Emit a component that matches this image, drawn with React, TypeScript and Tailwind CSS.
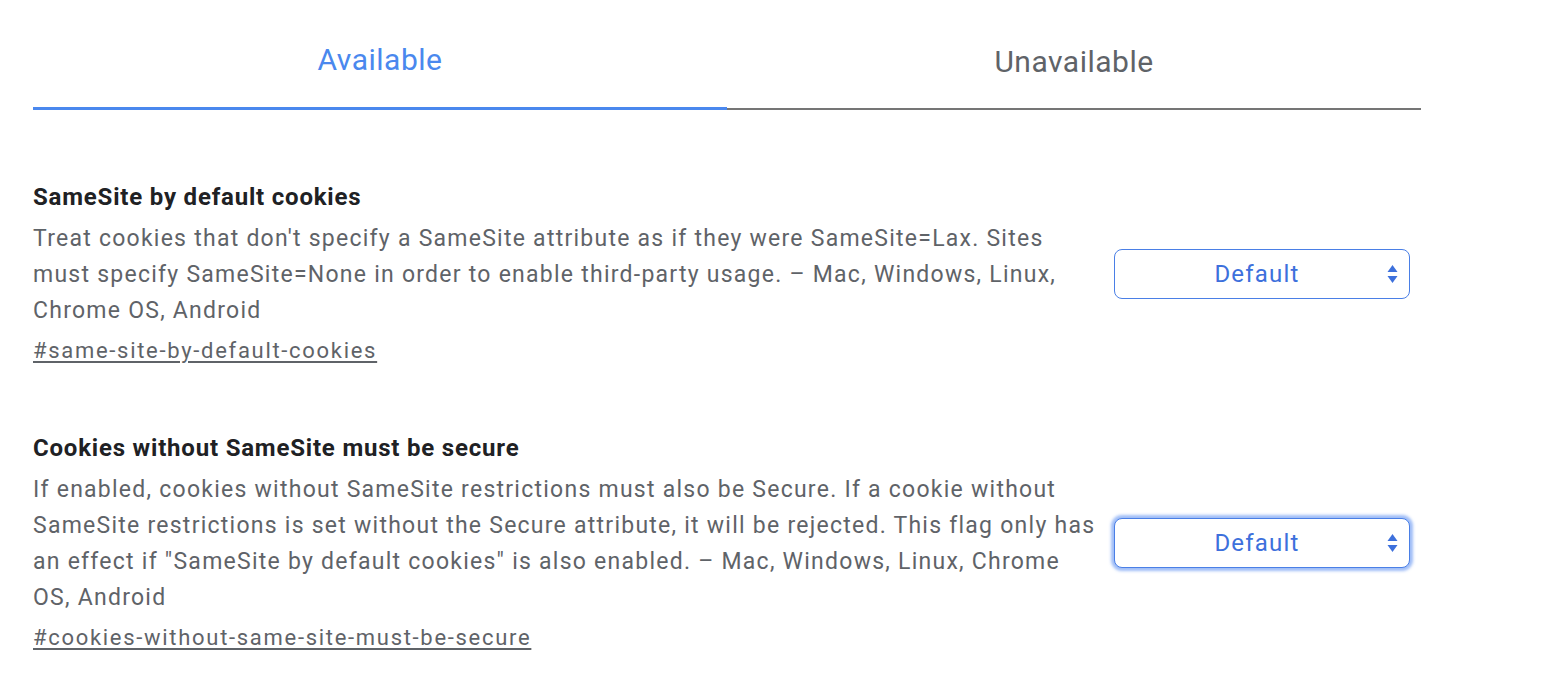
import React from 'react';

type Flag = {
  name: string;
  lines: string[];
  anchor: string;
  focused?: boolean;
};

// description lines broken the same way the page wraps them
const flags: Flag[] = [
  {
    name: 'SameSite by default cookies',
    lines: [
      "Treat cookies that don't specify a SameSite attribute as if they were SameSite=Lax. Sites",
      'must specify SameSite=None in order to enable third-party usage. – Mac, Windows, Linux,',
      'Chrome OS, Android',
    ],
    anchor: '#same-site-by-default-cookies',
  },
  {
    name: 'Cookies without SameSite must be secure',
    lines: [
      'If enabled, cookies without SameSite restrictions must also be Secure. If a cookie without',
      'SameSite restrictions is set without the Secure attribute, it will be rejected. This flag only has',
      'an effect if "SameSite by default cookies" is also enabled. – Mac, Windows, Linux, Chrome',
      'OS, Android',
    ],
    anchor: '#cookies-without-same-site-must-be-secure',
    focused: true,
  },
];

function SelectBox({ focused }: { focused?: boolean }) {
  return (
    <div
      className={`relative flex h-[50px] w-[296px] shrink-0 items-center justify-center rounded-[8px] border-[1.5px] border-[#4a7fe6] bg-white pr-[10px] ${
        focused ? 'shadow-[0_0_3px_3px_rgba(80,135,240,0.55)]' : ''
      }`}
    >
      <span className="text-[24px] tracking-[1.2px] text-[#3d70dc]">Default</span>
      {/* up / down arrows */}
      <svg className="absolute right-[11px] top-1/2 -translate-y-1/2" width="11" height="20" viewBox="0 0 11 20">
        <path d="M5.5 1 L10.5 8 H0.5 Z" fill="#3d70dc" />
        <path d="M5.5 19 L10.5 12 H0.5 Z" fill="#3d70dc" />
      </svg>
    </div>
  );
}

function FlagRow({ flag }: { flag: Flag }) {
  return (
    <div className="flex items-center">
      <div className="min-w-0 flex-1">
        <h3 className="text-[24px] font-bold leading-[36px] tracking-[0.8px] text-[#202124]">{flag.name}</h3>
        <p className="mt-[6px] text-[23px] leading-[36px] tracking-[1.25px] text-[#5f6368]">
          {flag.lines.map((l) => (
            <span key={l} className="block whitespace-nowrap">
              {l}
            </span>
          ))}
        </p>
        <a className="mt-[4px] block text-[22px] leading-[36px] tracking-[1.7px] text-[#5f6368] underline underline-offset-[3px]">
          {flag.anchor}
        </a>
      </div>
      <div className="mr-[11px]">
        <SelectBox focused={flag.focused} />
      </div>
    </div>
  );
}

export default function App() {
  return (
    <div className="min-h-[688px] w-[1542px] bg-white font-['Roboto',sans-serif]">
      <div className="w-[1421px] pl-[33px]">
        {/* Tabs */}
        <div className="flex">
          <div className="flex h-[110px] flex-1 flex-col">
            <div className="flex flex-1 items-start justify-center pt-[40px] text-[30px] leading-[40px] tracking-[0.5px] text-[#4a88ee]">
              Available
            </div>
            <div className="h-[3px] bg-[#4a88ee]" />
          </div>
          <div className="flex h-[110px] flex-1 flex-col">
            <div className="flex flex-1 items-start justify-center pt-[42px] text-[30px] leading-[40px] tracking-[0.5px] text-[#5f6368]">
              Unavailable
            </div>
            <div className="h-[2px] bg-[#757575]" />
          </div>
        </div>

        {/* Flags */}
        <div className="flex flex-col gap-[61px] pt-[69px]">
          {flags.map((f) => (
            <FlagRow key={f.anchor} flag={f} />
          ))}
        </div>
      </div>
    </div>
  );
}
